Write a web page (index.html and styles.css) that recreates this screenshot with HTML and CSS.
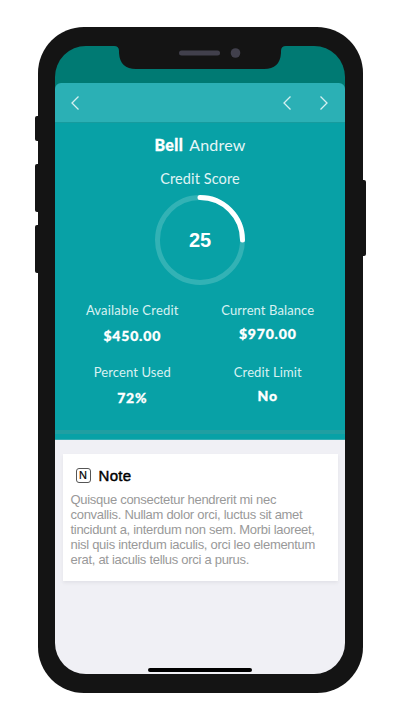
FILE: index.html
```html
<!DOCTYPE html>
<html lang="en">
<head>
<meta charset="utf-8">
<title>Credit Score</title>
<link rel="stylesheet" href="styles.css">
</head>
<body>
<div class="phone">
  <span class="key mute"></span>
  <span class="key up"></span>
  <span class="key down"></span>
  <span class="key power"></span>
  <main class="screen">
    <div class="status"></div>
    <nav class="nav">
      <svg class="chev" viewBox="0 0 10 16"><path d="M8.500 1.500 2 8 8.500 14.500"/></svg>
      <div class="pager">
        <svg class="chev" viewBox="0 0 10 16"><path d="M8.500 1.500 2 8 8.500 14.500"/></svg>
        <svg class="chev" viewBox="0 0 10 16"><path d="M1.5 1.5 8 8 1.5 14.5"/></svg>
      </div>
    </nav>
    <section class="hero">
      <h1 class="name"><b>Bell</b><span>Andrew</span></h1>
      <p class="score-label">Credit Score</p>
      <div class="ring">
        <svg viewBox="0 0 90 90"><circle class="track" cx="45" cy="45" r="42.5"/><path class="arc" d="M45 2.5A42.5 42.5 0 0 1 87.5 45"/></svg>
        <span class="score">25</span>
      </div>
      <div class="stats">
        <div class="stat"><span class="label available">Available Credit</span><b class="value low">$450.00</b></div>
        <div class="stat"><span class="label balance">Current Balance</span><b class="value">$970.00</b></div>
        <div class="stat"><span class="label used">Percent Used</span><b class="value low">72%</b></div>
        <div class="stat"><span class="label limit">Credit Limit</span><b class="value">No</b></div>
      </div>
      <div class="band"></div>
    </section>
    <article class="note">
      <h2 class="note-head"><span class="badge">N</span>Note</h2>
      <p class="note-text">Quisque consectetur hendrerit mi nec<br>convallis. Nullam dolor orci, luctus sit amet<br>tincidunt a, interdum non sem. Morbi laoreet,<br>nisl quis interdum iaculis, orci leo elementum<br>erat, at iaculis tellus orci a purus.</p>
    </article>
    <div class="home"></div>
  </main>
  <svg class="notch" viewBox="0 0 172 24"><path class="body" d="M0 0Q5 0 5 5V7Q6 23 22 23H150Q166 23 167 7V5Q167 0 172 0Z"/><rect class="part" x="65" y="4.5" width="41" height="5" rx="2.5"/><circle class="part" cx="121.500" cy="7" r="4.800"/></svg>
</div>
</body>
</html>
```
FILE: styles.css
```css
* { box-sizing: border-box; margin: 0; padding: 0; }
body { width: 400px; height: 720px; padding: 26.5px 37.5px; background: #fff; overflow: hidden; font-family: "Liberation Sans", sans-serif; }
.phone { position: relative; width: 325px; height: 666.5px; padding: 19.5px 17.5px; border-radius: 46px; background: #141414; }
.key { position: absolute; left: -3px; width: 4px; background: #141414; border-radius: 2px 0 0 2px; }
.mute { top: 89.500px; height: 25px; }
.up { top: 137.500px; height: 48px; }
.down { top: 198.500px; height: 48px; }
.power { left: auto; right: -3px; top: 153.500px; height: 76px; border-radius: 0 2px 2px 0; }
.screen { display: flex; flex-direction: column; width: 290px; height: 628px; border-radius: 31px; overflow: hidden; background: linear-gradient(#007a73 0 50px, #f0f0f5 50px); }
.status { height: 37px; flex: none; }
.nav { height: 39px; flex: none; display: flex; align-items: center; justify-content: space-between; padding: 0 16px 0 15px; background: #2bb0b5; border-radius: 6px 6px 0 0; }
.pager { display: flex; gap: 27px; }
.chev { width: 10px; height: 16px; fill: none; stroke: #d5f0f1; stroke-width: 1.3; }
.hero { height: 318px; flex: none; display: flex; flex-direction: column; align-items: center; border-top: 1px solid #169b9e; border-bottom: 1px solid #35adb2; background: #08a1a6; color: #fff; font-family: Lato, sans-serif; }
.name { display: flex; gap: 6px; margin-top: 11px; font-size: 16px; line-height: 22px; font-weight: 400; letter-spacing: .2px; color: #e6f6f7; }
.name b { font-weight: 900; letter-spacing: .4px; color: #fff; -webkit-text-stroke: .3px #fff; }
.score-label { margin-top: 13px; font-size: 14.500px; line-height: 20px; letter-spacing: .1px; color: #e0f4f5; }
.ring { position: relative; width: 90px; height: 90px; margin-top: 6px; display: grid; place-items: center; }
.ring svg { position: absolute; inset: 0; fill: none; stroke-width: 5; }
.track { stroke: #32b2b5; }
.arc { stroke: #fff; stroke-linecap: round; }
.score { font: bold 20px/22px "Liberation Sans", sans-serif; }
.stats { display: grid; grid-template-columns: 135.500px 135.500px; grid-auto-rows: 62px; margin-top: 16px; }
.stat { display: flex; flex-direction: column; align-items: center; }
.label { font-size: 13px; line-height: 18px; letter-spacing: .2px; color: #d8f1f2; }
.balance, .used, .limit { letter-spacing: .1px; }
.value { margin-top: 6px; font-size: 14px; line-height: 18px; font-weight: 900; letter-spacing: .8px; -webkit-text-stroke: .3px #fff; }
.low { margin-top: 8px; }
.band { width: 100%; height: 4px; margin-top: auto; margin-bottom: 5px; background: #209fa2; }
.note { width: 275px; height: 127px; flex: none; margin: 14px 0 0 7.500px; padding: 11px 8px; background: #fff; box-shadow: 0 2px 3px #e2e2e8; }
.note-head { display: flex; align-items: center; gap: 8px; height: 20px; padding-left: 5px; font-size: 15px; font-weight: 400; letter-spacing: .3px; color: #000; -webkit-text-stroke: .45px #000; }
.badge { display: grid; place-items: center; width: 15px; height: 15px; border: 1px solid #555; border-radius: 3px; font-size: 11px; line-height: 13px; -webkit-text-stroke: .2px #000; letter-spacing: 0; }
.note-text { margin-top: 7px; font-size: 13px; line-height: 15px; letter-spacing: -.29px; color: #999; white-space: nowrap; }
.home { width: 104px; height: 3.500px; flex: none; margin: auto auto 2.500px; border-radius: 2px; background: #000; }
.notch { position: absolute; left: 76.500px; top: 19px; width: 172px; height: 24px; }
.body { fill: #141414; }
.part { fill: #41404c; }
```
